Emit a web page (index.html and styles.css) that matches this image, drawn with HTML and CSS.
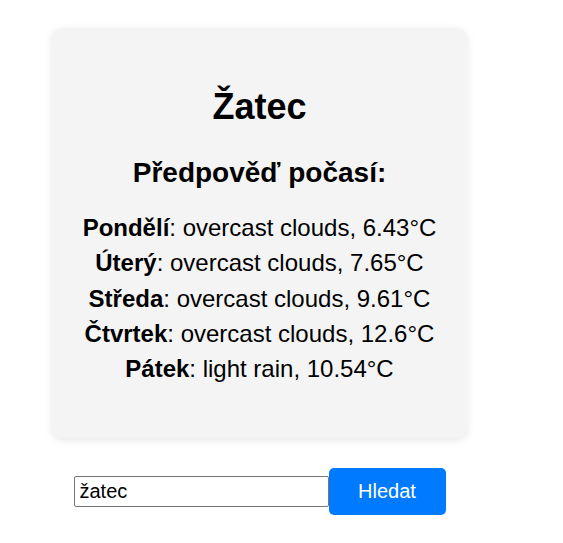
FILE: index.html
```html
<!DOCTYPE html>
<html lang="cs">
<head>
<meta charset="utf-8">
<title>Počasí</title>
<link rel="stylesheet" href="styles.css">
</head>
<body>
<div class="page">
  <div class="card">
    <h1 class="city">Žatec</h1>
    <h2 class="subtitle">Předpověď počasí:</h2>
    <div class="forecast">
      <div class="day"><strong>Pondělí</strong>: overcast clouds, 6.43°C</div>
      <div class="day"><strong>Úterý</strong>: overcast clouds, 7.65°C</div>
      <div class="day"><strong>Středa</strong>: overcast clouds, 9.61°C</div>
      <div class="day"><strong>Čtvrtek</strong>: overcast clouds, 12.6°C</div>
      <div class="day"><strong>Pátek</strong>: light rain, 10.54°C</div>
    </div>
  </div>
  <form class="search" onsubmit="return false">
    <input class="search-input" type="text" value="žatec">
    <button class="search-btn" type="submit">Hledat</button>
  </form>
</div>
</body>
</html>
```

FILE: styles.css
```css
html, body {
  margin: 0;
  padding: 0;
  background: #ffffff;
}

body {
  font-family: "Liberation Sans", Arial, sans-serif;
  color: #000;
}

.page {
  width: 415px;
  padding: 28px 0 0 52px;
}

.card {
  background: #f4f4f4;
  border-radius: 10px;
  box-shadow: 0 2px 8px rgba(0, 0, 0, 0.1);
  padding: 59px 20px 52px;
  text-align: center;
}

.city {
  margin: 0;
  font-size: 36px;
  line-height: 40px;
  font-weight: bold;
}

.subtitle {
  margin: 30px 0 0;
  font-size: 28px;
  line-height: 32px;
  font-weight: bold;
}

.forecast {
  margin-top: 21px;
  font-size: 24px;
  line-height: 35.25px;
}

.day strong {
  font-weight: bold;
}

.search {
  margin-top: 30px;
  display: flex;
  justify-content: center;
  align-items: center;
}

.search-input {
  box-sizing: border-box;
  width: 255px;
  height: 31px;
  margin: 0;
  padding: 0 5px;
  border: 1px solid #767676;
  border-radius: 2px;
  font-family: "Liberation Sans", Arial, sans-serif;
  font-size: 20px;
  color: #000;
  background: #fff;
}

.search-btn {
  box-sizing: border-box;
  width: 117px;
  height: 47px;
  margin: 0;
  padding: 0;
  border: none;
  border-radius: 5px;
  background: #007bff;
  color: #fff;
  font-family: "Liberation Sans", Arial, sans-serif;
  font-size: 20px;
  cursor: pointer;
}
```
